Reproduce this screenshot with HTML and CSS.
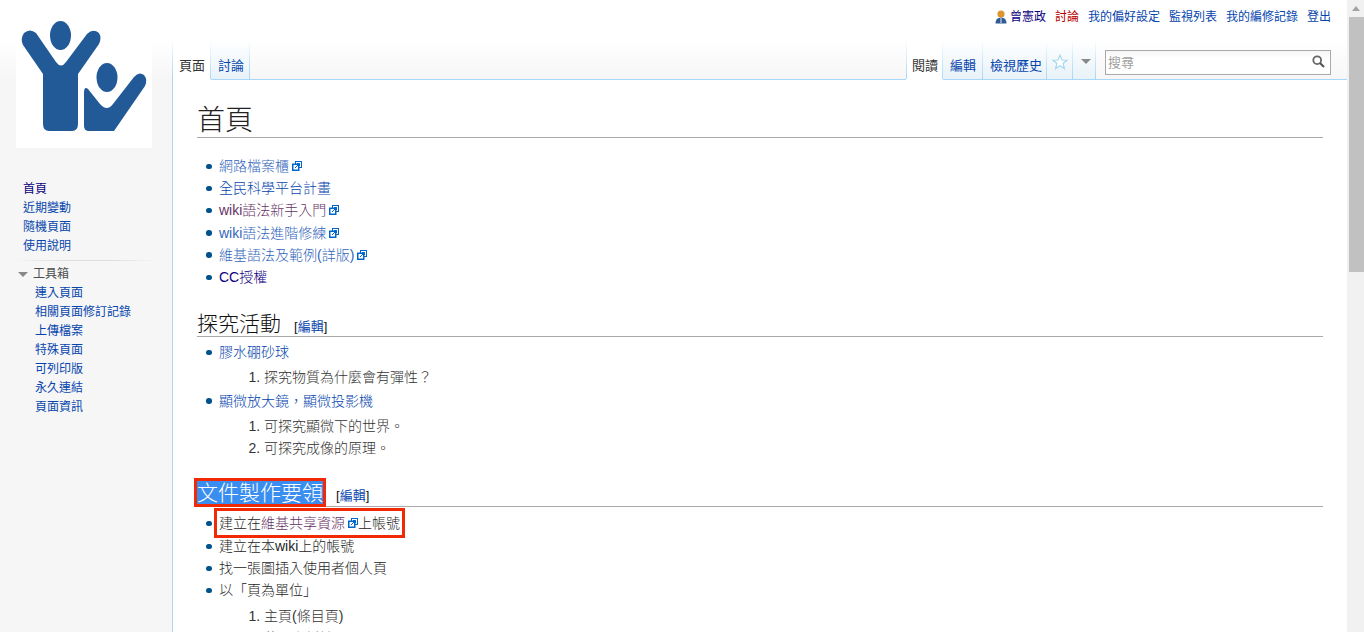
FILE: index.html
```html
<!DOCTYPE html>
<html lang="zh-Hant">
<head>
<meta charset="utf-8">
<title>首頁</title>
<link rel="stylesheet" href="styles.css">
</head>
<body>
<div class="page">
  <aside class="sidebar">
    <a class="logo" href="#">
      <svg viewBox="16 14 136 134" width="136" height="134" aria-label="logo">
        <rect x="16" y="14" width="136" height="134" fill="#fff"/>
        <ellipse cx="60.5" cy="35.5" rx="10.5" ry="14.5" fill="#225a98"/>
        <ellipse cx="107" cy="77.5" rx="10.5" ry="14.5" fill="#225a98"/>
        <path fill="#225a98" d="M23 45 Q20 39 24 33 Q30 28 36 33 L56 62 Q61 69 66 62 L87 34 Q93 28 99 33 Q102 38 99 44 L78 74 L78 124 Q78 131 72 131 L49 131 Q43 131 43 124 L43 74 Z"/>
        <path fill="#225a98" d="M84 93 Q84 86 88 89 L100 104 Q107 112 113 104 L134 77 Q139 71 144 75 Q148 80 145 86 L114 131 L89 131 Q84 131 84 126 Z"/>
      </svg>
    </a>
    <nav class="portal">
      <ul class="nav-list">
        <li><a class="visited" href="#">首頁</a></li>
        <li><a href="#">近期變動</a></li>
        <li><a href="#">隨機頁面</a></li>
        <li><a href="#">使用說明</a></li>
      </ul>
    </nav>
    <nav class="portal-tools">
      <h3 class="portal-title"><span class="arrow"></span>工具箱</h3>
      <ul class="nav-list nav-list-indent">
        <li><a href="#">連入頁面</a></li>
        <li><a href="#">相關頁面修訂記錄</a></li>
        <li><a href="#">上傳檔案</a></li>
        <li><a href="#">特殊頁面</a></li>
        <li><a href="#">可列印版</a></li>
        <li><a href="#">永久連結</a></li>
        <li><a href="#">頁面資訊</a></li>
      </ul>
    </nav>
  </aside>
  <div class="main">
    <div class="personal">
      <svg class="user-icon" viewBox="0 0 12 14" width="12" height="14" aria-hidden="true">
        <circle cx="6" cy="4" r="3.6" fill="#dd962f"/>
        <path d="M0.5 13.5 Q0.5 7.5 6 7.5 Q11.5 7.5 11.5 13.5 Z" fill="#2f5a94"/>
        <path d="M5.2 8 H6.8 V13 H5.2 Z" fill="#9db7d8"/>
      </svg>
      <a class="visited user-name" href="#">曾憲政</a>
      <a class="new" href="#">討論</a>
      <a href="#">我的偏好設定</a>
      <a href="#">監視列表</a>
      <a href="#">我的編修記錄</a>
      <a href="#">登出</a>
    </div>
    <div class="tabs">
      <div class="tab-group">
        <a class="tab tab-selected" href="#">頁面</a>
        <a class="tab" href="#">討論</a>
      </div>
      <div class="tab-group tab-group-right">
        <a class="tab tab-selected tab-first" href="#">閱讀</a>
        <a class="tab tab-edit" href="#">編輯</a>
        <a class="tab tab-wide" href="#">檢視歷史</a>
        <a class="tab tab-icon tab-star" href="#">
          <svg viewBox="0 0 16 16" width="16" height="16" aria-hidden="true"><path d="M8 1.2 L10 6 L15 6.3 L11.1 9.5 L12.4 14.6 L8 11.8 L3.6 14.6 L4.9 9.5 L1 6.3 L6 6 Z" fill="#fff" stroke="#a7d7f0" stroke-width="1.2"/></svg>
        </a>
        <a class="tab tab-icon tab-more" href="#"><span class="arrow arrow-more"></span></a>
        <div class="search">
          <span class="search-text">搜尋</span>
          <svg viewBox="0 0 13 13" width="13" height="13" aria-hidden="true"><circle cx="5.2" cy="5.2" r="3.9" fill="none" stroke="#666" stroke-width="1.8"/><path d="M8 8 L12 12" stroke="#555" stroke-width="2.2"/></svg>
        </div>
      </div>
    </div>
    <main class="content">
      <h1 class="title">首頁</h1>
      <ul class="list list-first">
        <li><a class="ext" href="#">網路檔案櫃</a><svg class="ext-icon" viewBox="0 0 10 10" width="10" height="10" aria-hidden="true"><rect x="3.5" y="0.5" width="6" height="6" fill="#fff" stroke="#06c"/><rect x="0.75" y="3.25" width="6" height="6" fill="#fff" stroke="#06c" stroke-width="1.5"/><path d="M3 7 L7.5 2.5 M5 2.5 H7.5 V5" fill="none" stroke="#06c"/></svg></li>
        <li><a href="#">全民科學平台計畫</a></li>
        <li><a class="ext-visited" href="#">wiki語法新手入門</a><svg class="ext-icon" viewBox="0 0 10 10" width="10" height="10" aria-hidden="true"><rect x="3.5" y="0.5" width="6" height="6" fill="#fff" stroke="#06c"/><rect x="0.75" y="3.25" width="6" height="6" fill="#fff" stroke="#06c" stroke-width="1.5"/><path d="M3 7 L7.5 2.5 M5 2.5 H7.5 V5" fill="none" stroke="#06c"/></svg></li>
        <li><a class="ext" href="#">wiki語法進階修練</a><svg class="ext-icon" viewBox="0 0 10 10" width="10" height="10" aria-hidden="true"><rect x="3.5" y="0.5" width="6" height="6" fill="#fff" stroke="#06c"/><rect x="0.75" y="3.25" width="6" height="6" fill="#fff" stroke="#06c" stroke-width="1.5"/><path d="M3 7 L7.5 2.5 M5 2.5 H7.5 V5" fill="none" stroke="#06c"/></svg></li>
        <li><a class="ext" href="#">維基語法及範例(詳版)</a><svg class="ext-icon" viewBox="0 0 10 10" width="10" height="10" aria-hidden="true"><rect x="3.5" y="0.5" width="6" height="6" fill="#fff" stroke="#06c"/><rect x="0.75" y="3.25" width="6" height="6" fill="#fff" stroke="#06c" stroke-width="1.5"/><path d="M3 7 L7.5 2.5 M5 2.5 H7.5 V5" fill="none" stroke="#06c"/></svg></li>
        <li><a class="visited" href="#">CC授權</a></li>
      </ul>
      <h2 class="heading heading-a">探究活動<span class="edit">[<a href="#">編輯</a>]</span></h2>
      <ul class="list">
        <li><a href="#">膠水硼砂球</a>
          <ol class="sub"><li>探究物質為什麼會有彈性？</li></ol>
        </li>
        <li><a href="#">顯微放大鏡，顯微投影機</a>
          <ol class="sub"><li>可探究顯微下的世界。</li><li>可探究成像的原理。</li></ol>
        </li>
      </ul>
      <h2 class="heading heading-b"><span class="selected">文件製作要領</span><span class="edit">[<a href="#">編輯</a>]</span></h2>
      <ul class="list list-tight">
        <li><span class="boxed">建立在<a class="ext-visited" href="#">維基共享資源</a><svg class="ext-icon" viewBox="0 0 10 10" width="10" height="10" aria-hidden="true"><rect x="3.5" y="0.5" width="6" height="6" fill="#fff" stroke="#06c"/><rect x="0.75" y="3.25" width="6" height="6" fill="#fff" stroke="#06c" stroke-width="1.5"/><path d="M3 7 L7.5 2.5 M5 2.5 H7.5 V5" fill="none" stroke="#06c"/></svg>上帳號</span></li>
        <li>建立在本wiki上的帳號</li>
        <li>找一張圖插入使用者個人頁</li>
        <li>以「頁為單位」
          <ol class="sub"><li>主頁(條目頁)</li><li>使用者討論頁</li></ol>
        </li>
      </ul>
    </main>
  </div>
</div>
<div class="scrollbar">
  <span class="sb-up"></span>
  <span class="sb-thumb"></span>
</div>
</body>
</html>
```
FILE: styles.css
```css
html, body { margin: 0; padding: 0; height: 632px; overflow: hidden; }
body {
  background: #f6f6f6;
  color: #252525;
  font-family: "Liberation Sans", "Noto Sans CJK TC", sans-serif;
  font-size: 14px;
}
a { color: #0645ad; text-decoration: none; }
a.visited { color: #0b0080; }
a.new { color: #ba0000; }
a.ext { color: #3366bb; }
a.ext-visited { color: #663366; }
ul, ol { margin: 0; padding: 0; }

.page {
  display: flex;
  width: 1347px;
  height: 632px;
  background: linear-gradient(#fff 40px, #f6f6f6 80px);
}
.sidebar { width: 172px; flex: none; padding-top: 14px; box-sizing: border-box; font-size: 12px; }
.logo { display: block; margin-left: 16px; height: 134px; }
.logo svg { display: block; }

.portal { margin-top: 32px; }
.portal-tools {
  margin-top: 4px;
  padding-top: 5px;
  background: linear-gradient(90deg, transparent 15px, #ddd 60px, #ddd 110px, transparent 156px) top / 100% 1px no-repeat;
}
.nav-list { list-style: none; padding-left: 23px; line-height: 19px; }
.nav-list-indent { padding-left: 35px; }
.portal-title {
  margin: 0;
  font-size: 12px;
  font-weight: 400;
  color: #4d4d4d;
  line-height: 19px;
  display: flex;
  align-items: center;
  padding-left: 18px;
}
.arrow {
  width: 0; height: 0;
  border-left: 5px solid transparent;
  border-right: 5px solid transparent;
  border-top: 5px solid #888;
  margin-right: 5px;
}
.arrow-more { margin: 0 0 0 2px; display: block; }

.main { flex: 1; min-width: 0; display: flex; flex-direction: column; }
.personal {
  height: 40px;
  box-sizing: border-box;
  display: flex;
  justify-content: flex-end;
  align-items: flex-start;
  gap: 9px;
  padding: 9px 16px 0 0;
  font-size: 12px;
  line-height: 17px;
}
.user-icon { margin-right: -6px; margin-top: 1px; }

.tabs {
  height: 40px;
  box-sizing: border-box;
  display: flex;
  justify-content: space-between;
  border-bottom: 1px solid #a7d7f9;
  font-size: 13px;
  background: linear-gradient(transparent, #a7d7f9) left / 1px 100% no-repeat;
}
.tab-group { display: flex; height: 40px; padding-left: 1px; }
.tab {
  box-sizing: border-box;
  height: 40px;
  padding: 17px 6px 0 7px;
  line-height: 17px;
  border-bottom: 1px solid #a7d7f9;
  background:
    linear-gradient(transparent, #a7d7f9) right / 1px 100% no-repeat,
    linear-gradient(#fff, #e8f2f8);
}
.tab-selected {
  color: #333;
  border-bottom-color: #fff;
  padding-left: 6px;
  background:
    linear-gradient(transparent, #a7d7f9) right / 1px 100% no-repeat,
    #fff;
}
.tab-first {
  padding: 17px 5px 0 6px;
  background:
    linear-gradient(transparent, #a7d7f9) right / 1px 100% no-repeat,
    linear-gradient(transparent, #a7d7f9) left / 1px 100% no-repeat,
    #fff;
}
.tab-edit { padding-right: 7px; }
.tab-wide { padding-right: 5px; }
.tab-group-right { padding-right: 16px; padding-left: 0; }
.tab-icon { display: flex; align-items: center; justify-content: center; padding: 4px 0 0; }
.tab-star { width: 26px; }
.tab-more { width: 23px; }
.search {
  box-sizing: border-box;
  width: 226px;
  height: 25px;
  margin: 10px 0 0 9px;
  padding: 0 5px 2px 2px;
  border: 1px solid #aaa;
  background: linear-gradient(#f6f6f6, #fff 8px);
  display: flex;
  align-items: center;
  justify-content: space-between;
  color: #a0a0a0;
}

.content {
  flex: 1;
  background: #fff;
  border-left: 1px solid #a7d7f9;
  padding: 0 24px;
  overflow: hidden;
  font-weight: 300;
}
.title {
  margin: 24px 0 0;
  font-size: 28px;
  font-weight: 300;
  line-height: 33px;
  color: #222;
  border-bottom: 1px solid #aaa;
}
.list { list-style: none; padding-left: 22px; color: #252525; line-height: 22.2px; }
.list > li { position: relative; }
.list > li::before {
  content: "";
  position: absolute;
  left: -12.7px;
  top: 8.5px;
  width: 5.5px;
  height: 5.5px;
  border-radius: 50%;
  background: #00528c;
}
.list-first { margin-top: 17px; }
.list-tight > li:first-child { padding-bottom: 0.6px; }
.ext-icon { margin-left: 3px; vertical-align: 0; }
.heading {
  margin: 0;
  font-size: 21px;
  font-weight: 300;
  line-height: 18px;
  color: #111;
  border-bottom: 1px solid #aaa;
}
.heading-a { margin-top: 27px; margin-bottom: 4px; }
.heading-b { margin-top: 23px; margin-bottom: 5px; line-height: 20px; }
.edit { font-size: 13px; font-weight: 400; margin-left: 13px; }
.sub { list-style: decimal; padding-left: 45px; padding-top: 3px; padding-bottom: 1px; color: #333; }
.selected {
  background: #3a8ef0;
  color: #fff;
  outline: 3px solid #f12a05;
  outline-offset: 0;
}
.boxed { outline: 3px solid #f12a05; outline-offset: 2px; display: inline-block; line-height: 20px; }

.scrollbar {
  position: fixed;
  top: 0; right: 0; bottom: 0;
  width: 17px;
  background: #f1f1f1;
  display: flex;
  flex-direction: column;
  align-items: center;
}
.sb-up {
  width: 0; height: 0;
  margin: 6px 0 6px;
  border-left: 4px solid transparent;
  border-right: 4px solid transparent;
  border-bottom: 5px solid #a3a3a3;
}
.sb-thumb { width: 15px; height: 255px; background: #c1c1c1; align-self: flex-end; }
```
